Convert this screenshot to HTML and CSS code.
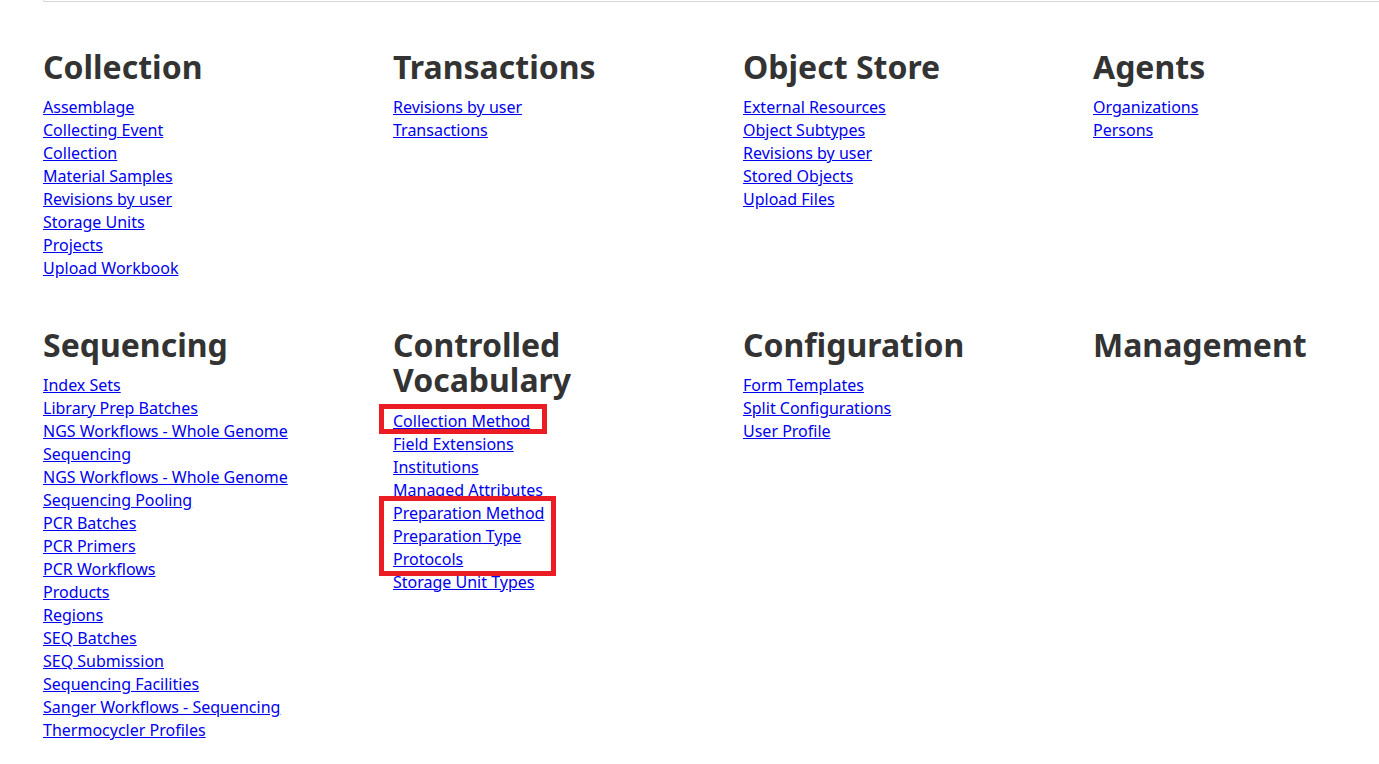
FILE: index.html
```html
<!DOCTYPE html>
<html lang="en">
<head>
<meta charset="utf-8">
<title>Navigation</title>
<link rel="stylesheet" href="styles.css">
</head>
<body>
<div class="topbar"></div>
<main class="grid">
  <section class="group">
    <h2>Collection</h2>
    <ul>
      <li><a href="#">Assemblage</a></li>
      <li><a href="#">Collecting Event</a></li>
      <li><a href="#">Collection</a></li>
      <li><a href="#">Material Samples</a></li>
      <li><a href="#">Revisions by user</a></li>
      <li><a href="#">Storage Units</a></li>
      <li><a href="#">Projects</a></li>
      <li><a href="#">Upload Workbook</a></li>
    </ul>
  </section>
  <section class="group">
    <h2>Transactions</h2>
    <ul>
      <li><a href="#">Revisions by user</a></li>
      <li><a href="#">Transactions</a></li>
    </ul>
  </section>
  <section class="group">
    <h2>Object Store</h2>
    <ul>
      <li><a href="#">External Resources</a></li>
      <li><a href="#">Object Subtypes</a></li>
      <li><a href="#">Revisions by user</a></li>
      <li><a href="#">Stored Objects</a></li>
      <li><a href="#">Upload Files</a></li>
    </ul>
  </section>
  <section class="group">
    <h2>Agents</h2>
    <ul>
      <li><a href="#">Organizations</a></li>
      <li><a href="#">Persons</a></li>
    </ul>
  </section>
  <section class="group">
    <h2>Sequencing</h2>
    <ul>
      <li><a href="#">Index Sets</a></li>
      <li><a href="#">Library Prep Batches</a></li>
      <li><a href="#">NGS Workflows - Whole Genome Sequencing</a></li>
      <li><a href="#">NGS Workflows - Whole Genome Sequencing Pooling</a></li>
      <li><a href="#">PCR Batches</a></li>
      <li><a href="#">PCR Primers</a></li>
      <li><a href="#">PCR Workflows</a></li>
      <li><a href="#">Products</a></li>
      <li><a href="#">Regions</a></li>
      <li><a href="#">SEQ Batches</a></li>
      <li><a href="#">SEQ Submission</a></li>
      <li><a href="#">Sequencing Facilities</a></li>
      <li><a href="#">Sanger Workflows - Sequencing</a></li>
      <li><a href="#">Thermocycler Profiles</a></li>
    </ul>
  </section>
  <section class="group">
    <h2>Controlled Vocabulary</h2>
    <ul class="marked">
      <li><a href="#">Collection Method</a></li>
      <li><a href="#">Field Extensions</a></li>
      <li><a href="#">Institutions</a></li>
      <li><a href="#">Managed Attributes</a></li>
      <li><a href="#">Preparation Method</a></li>
      <li><a href="#">Preparation Type</a></li>
      <li><a href="#">Protocols</a></li>
      <li><a href="#">Storage Unit Types</a></li>
      <span class="mark mark-one"></span>
      <span class="mark mark-two"></span>
    </ul>
  </section>
  <section class="group">
    <h2>Configuration</h2>
    <ul>
      <li><a href="#">Form Templates</a></li>
      <li><a href="#">Split Configurations</a></li>
      <li><a href="#">User Profile</a></li>
    </ul>
  </section>
  <section class="group">
    <h2>Management</h2>
  </section>
</main>
</body>
</html>
```
FILE: styles.css
```css
html, body {
  margin: 0;
  padding: 0;
  background: #ffffff;
}

body {
  font-family: "Noto Sans", "Open Sans", sans-serif;
  color: #333333;
  overflow: hidden;
}

.topbar {
  margin-left: 43px;
  height: 1px;
  border-left: 1px solid #d6d6d6;
  border-bottom: 1px solid #d6d6d6;
  border-bottom-left-radius: 3px;
}

.grid {
  display: grid;
  grid-template-columns: repeat(4, 350px);
  row-gap: 47px;
  padding: 47px 0 0 43px;
}

.group h2 {
  margin: 0 0 12px 0;
  font-size: 32px;
  line-height: 35.2px;
  font-weight: 700;
  color: #333333;
  width: 320px;
}

.group ul {
  list-style: none;
  margin: 0;
  padding: 0;
  position: relative;
}

.group li {
  font-size: 16px;
  line-height: 23px;
  width: 250px;
}

.group a {
  color: #0000ee;
  text-decoration: underline;
}

.mark {
  position: absolute;
  border: 5px solid #ec1c24;
  box-sizing: border-box;
}

.mark-one {
  left: -14px;
  top: -6px;
  width: 168px;
  height: 30px;
}

.mark-two {
  left: -14px;
  top: 86px;
  width: 177px;
  height: 80px;
}
```
